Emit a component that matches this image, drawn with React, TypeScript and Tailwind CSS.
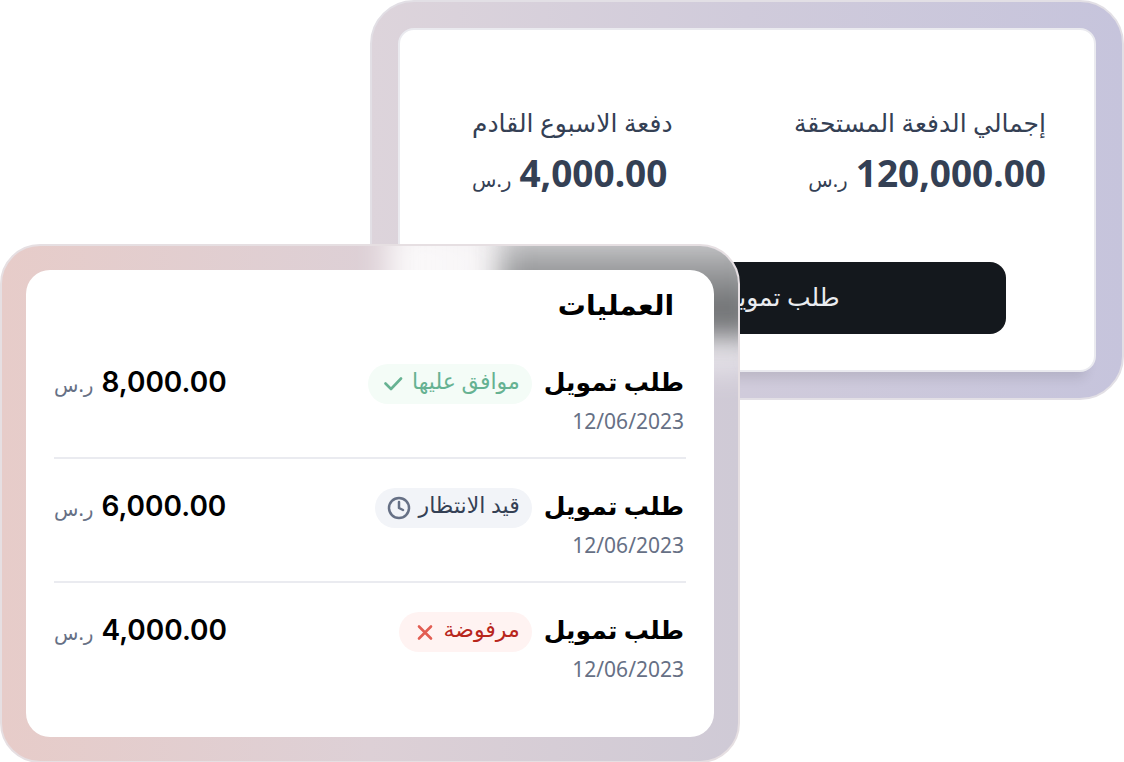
import { Clock } from "lucide-react";

type Status = "approved" | "pending" | "rejected";

type Operation = {
  id: number;
  title: string;
  date: string;
  amount: string;
  status: Status;
};

const operations: Operation[] = [
  { id: 1, title: "طلب تمويل", date: "12/06/2023", amount: "8,000.00", status: "approved" },
  { id: 2, title: "طلب تمويل", date: "12/06/2023", amount: "6,000.00", status: "pending" },
  { id: 3, title: "طلب تمويل", date: "12/06/2023", amount: "4,000.00", status: "rejected" },
];

function StrokeIcon({ d, className }: { d: string; className: string }) {
  return (
    <svg
      viewBox="0 0 20 20"
      fill="none"
      stroke="currentColor"
      strokeWidth={2.6}
      strokeLinecap="round"
      strokeLinejoin="round"
      className={className}
      aria-hidden
    >
      <path d={d} />
    </svg>
  );
}

function StatusBadge({ status }: { status: Status }) {
  if (status === "approved") {
    return (
      <span className="flex h-10 items-center gap-2 rounded-full bg-[#f4fcf7] pr-3 pl-4 text-[#66b292]">
        <span className="pb-2 text-[22px] leading-8">موافق عليها</span>
        <StrokeIcon d="M1.5 9.5 7 15 17 4.5" className="size-5" />
      </span>
    );
  }
  if (status === "pending") {
    return (
      <span className="flex h-10 items-center gap-2 rounded-full bg-[#f2f4f8] px-3 text-[#344054]">
        <span className="pb-2 text-[22px] leading-8">قيد الانتظار</span>
        <Clock className="size-6 text-[#667085]" strokeWidth={2.5} aria-hidden />
      </span>
    );
  }
  return (
    <span className="flex h-10 items-center gap-2 rounded-full bg-[#fff3f2] pr-3 pl-4 text-[#b8261c]">
      <span className="pb-2 text-[22px] leading-8">مرفوضة</span>
      <StrokeIcon d="M4 4.5 16 16.5M16 4.5 4 16.5" className="size-5 text-[#e25d52]" />
    </span>
  );
}

function OperationRow({ op }: { op: Operation }) {
  return (
    <li className="flex h-[124px] items-start justify-between border-b-2 border-[#eaebf0] pt-[26px] pr-0.5 last:border-b-0">
      <div className="flex gap-3">
        <div className="flex flex-col">
          <h3 className="text-[25px] leading-10 font-semibold text-black">{op.title}</h3>
          <time className="text-[21px] leading-10 text-[#667085]">{op.date}</time>
        </div>
        <div className="pt-[3px]">
          <StatusBadge status={op.status} />
        </div>
      </div>
      <p className="flex items-baseline gap-2">
        <span className="font-['Inter'] text-[28px] leading-[42px] font-semibold text-black">
          {op.amount}
        </span>
        <span className="text-[20px] text-[#667085]">ر.س</span>
      </p>
    </li>
  );
}

function Payment({ label, amount, end }: { label: string; amount: string; end?: boolean }) {
  return (
    <div className="text-[#344054]">
      <dt className="text-[25px] leading-10">{label}</dt>
      <dd className={end ? "flex items-baseline justify-end gap-2" : "flex items-baseline gap-2"}>
        <span className="text-[37px] leading-[62px] font-bold">{amount}</span>
        <span className="text-[20px]">ر.س</span>
      </dd>
    </div>
  );
}

export default function App() {
  return (
    <main dir="rtl" className="bg-white font-['Noto_Sans','DejaVu_Sans',sans-serif]">
      <section className="ml-[370px] rounded-[44px] border-2 border-[#e2dfe5] bg-linear-to-r from-[#ddd4db] via-[#d0cbdb] to-[#c6c4dc] p-[26px]">
        <div className="rounded-2xl border-2 border-[#eaeaef] bg-white px-12 pt-[72px] pb-9 shadow-[0_16px_12px_-10px_rgba(0,0,0,0.1)]">
          <dl className="flex justify-between pl-6">
            <Payment label="إجمالي الدفعة المستحقة" amount="120,000.00" />
            <Payment label="دفعة الاسبوع القادم" amount="4,000.00" end />
          </dl>
          <button
            type="button"
            className="mt-[58px] mr-10 flex h-[72px] w-[452px] items-center justify-center rounded-2xl bg-[#14181d] pb-0.5 text-[25px] text-[#eaecf0]"
          >
            طلب تمويل
          </button>
        </div>
      </section>

      <section className="relative -mt-[156px] mr-96 overflow-hidden rounded-[40px] border-2 border-[#e6dfe2] bg-linear-to-r from-[#e7ccc9] via-[#ddd0d6] to-[#cfcad6] p-6">
        {/* soft reflections of the card behind the frame */}
        <div className="absolute -top-6 -right-6 h-[148px] w-[374px] bg-linear-to-l from-white/50 to-white/90 blur-[16px]" />
        <div className="absolute -top-4 -right-6 h-[106px] w-[262px] bg-linear-to-b from-[#d0d0d2] via-[#737577] via-70% to-[#6b6d6f] blur-[14px]" />
        <div className="relative rounded-3xl bg-white px-7 pt-[11px] pb-[30px]">
          <h2 className="px-3 pb-2 text-[28px] leading-[46px] font-semibold text-black">العمليات</h2>
          <ul>
            {operations.map((op) => (
              <OperationRow key={op.id} op={op} />
            ))}
          </ul>
        </div>
      </section>
    </main>
  );
}
